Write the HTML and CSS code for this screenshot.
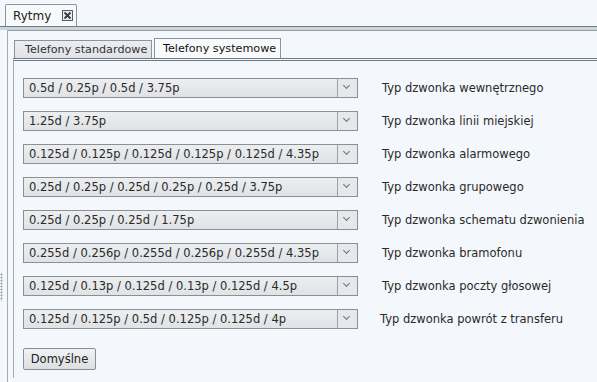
FILE: index.html
```html
<!DOCTYPE html>
<html lang="pl">
<head>
    <meta charset="UTF-8">
    <title>Rytmy</title>
    <link rel="stylesheet" href="styles.css">
</head>
<body>

<div class="grip"></div>

<div class="tabbar">
    <div class="outer-tab">
        <span>Rytmy</span>
        <span class="close-box">
            <svg width="11" height="11" viewBox="0 0 11 11">
                <rect x="0.5" y="0.5" width="10" height="10" fill="#e9ecef" stroke="#555d66"/>
                <path d="M2.5 2.5 L8.5 8.5 M8.5 2.5 L2.5 8.5" stroke="#333a42" stroke-width="1.8"/>
            </svg>
        </span>
    </div>
</div>

<div class="outer-frame">
    <div class="outer-panel">
        <div class="inner-tabs">
            <div class="inner-tab">Telefony standardowe</div>
            <div class="inner-tab active">Telefony systemowe</div>
        </div>

        <div class="inner-panel">
            <div class="rows">
                <div class="row">
                    <div class="combo"><span class="combo-text">0.5d / 0.25p / 0.5d / 3.75p</span><span class="combo-arrow"></span></div>
                    <span class="row-label">Typ dzwonka wewnętrznego</span>
                </div>
                <div class="row">
                    <div class="combo"><span class="combo-text">1.25d / 3.75p</span><span class="combo-arrow"></span></div>
                    <span class="row-label">Typ dzwonka linii miejskiej</span>
                </div>
                <div class="row">
                    <div class="combo"><span class="combo-text">0.125d / 0.125p / 0.125d / 0.125p / 0.125d / 4.35p</span><span class="combo-arrow"></span></div>
                    <span class="row-label">Typ dzwonka alarmowego</span>
                </div>
                <div class="row">
                    <div class="combo"><span class="combo-text">0.25d / 0.25p / 0.25d / 0.25p / 0.25d / 3.75p</span><span class="combo-arrow"></span></div>
                    <span class="row-label">Typ dzwonka grupowego</span>
                </div>
                <div class="row">
                    <div class="combo"><span class="combo-text">0.25d / 0.25p / 0.25d / 1.75p</span><span class="combo-arrow"></span></div>
                    <span class="row-label">Typ dzwonka schematu dzwonienia</span>
                </div>
                <div class="row">
                    <div class="combo"><span class="combo-text">0.255d / 0.256p / 0.255d / 0.256p / 0.255d / 4.35p</span><span class="combo-arrow"></span></div>
                    <span class="row-label">Typ dzwonka bramofonu</span>
                </div>
                <div class="row">
                    <div class="combo"><span class="combo-text">0.125d / 0.13p / 0.125d / 0.13p / 0.125d / 4.5p</span><span class="combo-arrow"></span></div>
                    <span class="row-label">Typ dzwonka poczty głosowej</span>
                </div>
                <div class="row">
                    <div class="combo"><span class="combo-text">0.125d / 0.125p / 0.5d / 0.125p / 0.125d / 4p</span><span class="combo-arrow"></span></div>
                    <span class="row-label last">Typ dzwonka powrót z transferu</span>
                </div>
            </div>

            <button class="btn">Domyślne</button>
        </div>
    </div>
</div>

</body>
</html>
```

FILE: styles.css
```css
:root {
    --bg: #f4f7fb;
    --border-dark: #6f7983;
    --border: #8c949c;
    --text: #222;
}
html, body {
    margin: 0;
    padding: 0;
    height: 100%;
    overflow: hidden;
}
body {
    position: relative;
    background-color: var(--bg);
    color: var(--text);
    font-family: 'DejaVu Sans', Tahoma, sans-serif;
    font-size: 11px;
}

/* splitter grip on the left edge */
.grip {
    position: absolute;
    left: 0;
    top: 273px;
    width: 3px;
    height: 28px;
    background-image: radial-gradient(circle, #9aa2aa 45%, transparent 50%);
    background-size: 3px 3px;
}

.tabbar {
    height: 26px;
    padding-left: 5px;
    display: flex;
    align-items: flex-end;
}
.outer-tab {
    width: 72px;
    height: 22px;
    box-sizing: border-box;
    border: 1px solid var(--border);
    border-bottom: none;
    border-radius: 2px 2px 0 0;
    background-color: #f7f9fb;
    display: flex;
    align-items: center;
    padding-left: 7px;
    font-size: 12px;
    white-space: nowrap;
}
.close-box {
    margin-left: 11px;
    display: flex;
}

.outer-frame {
    border-top: 1px solid var(--border-dark);
    box-shadow: inset 0 3px 0 #ccd3db;
    padding-top: 3px;
}
.outer-panel {
    margin-left: 7px;
    border-top: 1px solid #949ca5;
    border-left: 1px solid #a3abb3;
    padding: 7px 0 0 6px;
    height: 345px;
}

.inner-tabs {
    display: flex;
    align-items: flex-end;
    gap: 2px;
    height: 20px;
}
.inner-tab {
    height: 18px;
    box-sizing: border-box;
    border: 1px solid var(--border);
    border-bottom: none;
    background: linear-gradient(#ebedf0, #dfe2e6);
    padding: 0 0 0 10px;
    line-height: 17px;
    font-size: 11.2px;
    color: #333;
    white-space: nowrap;
    overflow: hidden;
}
.inner-tab:first-child {
    width: 138px;
}
.inner-tab.active {
    height: 20px;
    width: 127px;
    padding-left: 8px;
    background: #f9fafc;
    line-height: 19px;
    color: #111;
}

.inner-panel {
    border-top: 3px double var(--border-dark);
    border-left: 1px solid #a3abb3;
    margin-left: -1px;
    padding: 17px 0 0 9px;
    height: 300px;
}
.rows {
    display: flex;
    flex-direction: column;
    gap: 13px;
}
.row {
    display: flex;
    align-items: center;
    height: 20px;
}
.combo {
    flex: none;
    width: 335px;
    height: 20px;
    box-sizing: border-box;
    border: 1px solid #8a9096;
    background: linear-gradient(#eceef0, #e0e2e5);
    display: flex;
}
.combo-text {
    flex: 1;
    padding-left: 5px;
    line-height: 18px;
    font-size: 11.5px;
    color: #2a2a2a;
    white-space: nowrap;
}
.combo-arrow {
    width: 19px;
    border-left: 1px solid #9aa0a6;
    background: #e6e8eb;
    position: relative;
}
.combo-arrow::after {
    content: "";
    position: absolute;
    left: 6px;
    top: 4px;
    width: 4px;
    height: 4px;
    border-right: 1.5px solid #6a737c;
    border-bottom: 1.5px solid #6a737c;
    transform: rotate(45deg);
}
.row-label {
    margin-left: 24px;
    font-size: 11.5px;
    color: #2a2a2a;
    white-space: nowrap;
}
.row-label.last {
    margin-left: 22px;
}

.btn {
    margin-top: 19px;
    width: 73px;
    height: 22px;
    border: 1px solid #888e95;
    border-radius: 2px;
    background: linear-gradient(#f1f2f3, #dcdee1);
    font-family: inherit;
    font-size: 11.5px;
    color: #222;
    padding: 0;
}
```
